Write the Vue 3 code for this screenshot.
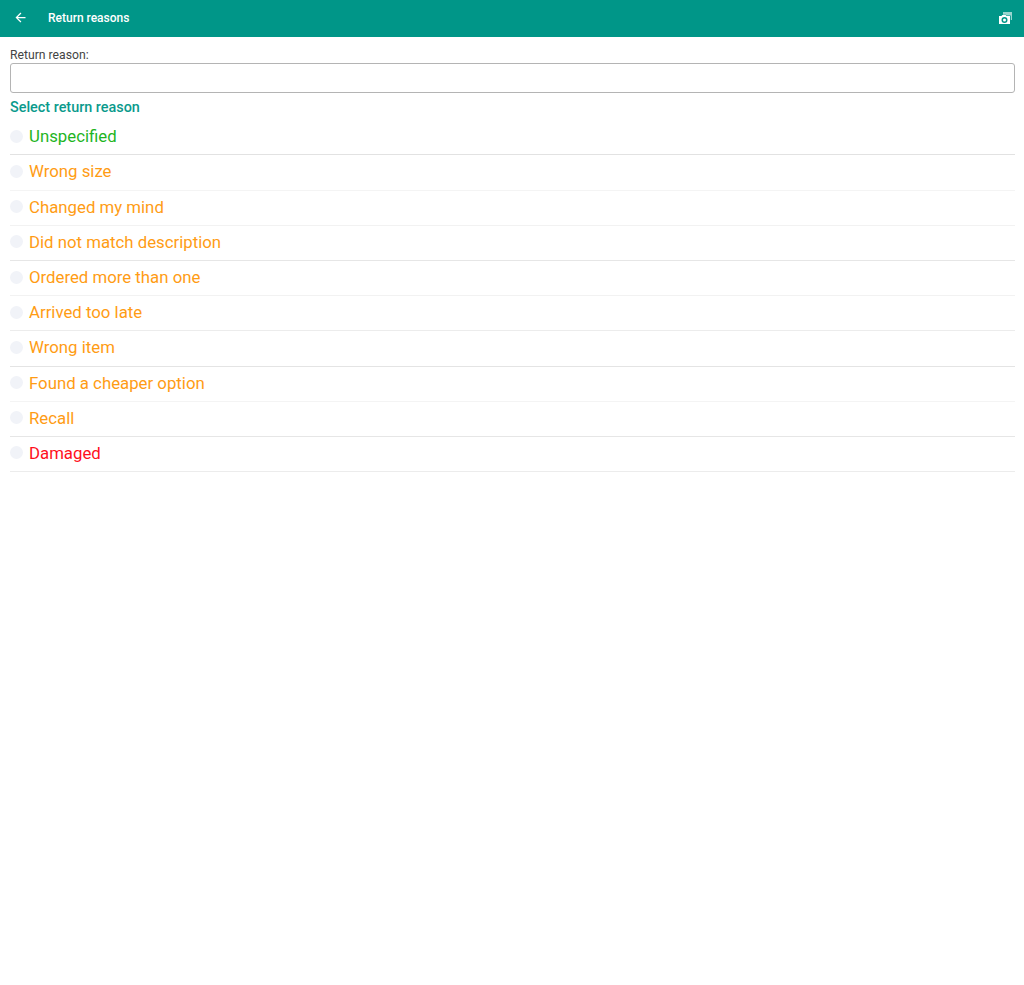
<script setup>
const orange = '#ff9c14'

const reasons = [
  { label: 'Unspecified', color: '#1fb51f', line: '#e2e2e2' },
  { label: 'Wrong size', color: orange, line: '#f4f4f4' },
  { label: 'Changed my mind', color: orange, line: '#f2f2f2' },
  { label: 'Did not match description', color: orange, line: '#e6e6e6' },
  { label: 'Ordered more than one', color: orange, line: '#f2f2f2' },
  { label: 'Arrived too late', color: orange, line: '#ececec' },
  { label: 'Wrong item', color: orange, line: '#e4e4e4' },
  { label: 'Found a cheaper option', color: orange, line: '#f4f4f4' },
  { label: 'Recall', color: orange, line: '#e6e6e6' },
  { label: 'Damaged', color: '#ff1020', line: '#ececec' }
]
</script>

<template>
  <div class="page">
    <header class="toolbar">
      <button class="icon-btn back" type="button">
        <svg width="15" height="15" viewBox="0 0 24 24" fill="#fff">
          <path d="M20 11H7.83l5.59-5.59L12 4l-8 8 8 8 1.41-1.41L7.83 13H20v-2z" />
        </svg>
      </button>
      <span class="title">Return reasons</span>
      <button class="icon-btn camera" type="button">
        <svg width="14" height="14" viewBox="0 0 14 14">
          <path fill="#fff" opacity="0.6" d="M5 1h9v8h-1.200V4.500H8.500L8 3.800H5z" />
          <path fill="#fff" fill-rule="evenodd" d="M1 5h2.500l.8-1h3.400l.8 1H12v8H1zM6.500 6a3 3 0 1 0 0 6a3 3 0 1 0 0-6zM6.500 7.500a1.500 1.500 0 1 1 0 3a1.500 1.500 0 1 1 0-3z" />
        </svg>
      </button>
    </header>

    <main class="content">
      <label class="field-label">Return reason:</label>
      <input class="field-input" type="text" />
      <h2 class="section-title">Select return reason</h2>
      <ul class="reason-list">
        <li
          v-for="r in reasons"
          :key="r.label"
          class="reason-row"
          :style="{ borderBottomColor: r.line }"
        >
          <span class="radio"></span>
          <span class="reason-text" :style="{ color: r.color }">{{ r.label }}</span>
        </li>
      </ul>
    </main>
  </div>
</template>

<style>
html, body {
  background: #fff;
}
</style>

<style scoped>
.page {
  min-height: 985px;
  background: #fff;
  font-family: Roboto, "Liberation Sans", sans-serif;
}

.toolbar {
  display: flex;
  align-items: center;
  box-sizing: border-box;
  height: 37px;
  padding-bottom: 1px;
  background: #009688;
  color: #fff;
}

.icon-btn {
  display: flex;
  align-items: center;
  justify-content: center;
  padding: 0;
  border: none;
  background: transparent;
}

.back {
  width: 15px;
  margin-left: 13px;
  margin-bottom: 1px;
}

.title {
  margin-left: 20px;
  font-size: 12px;
  font-weight: 500;
}

.camera {
  width: 14px;
  margin-left: auto;
  margin-right: 12px;
}

.content {
  display: flex;
  flex-direction: column;
  padding: 10px 9px 0 10px;
}

.field-label {
  font-size: 12.2px;
  line-height: 16px;
  color: #444;
}

.field-input {
  box-sizing: border-box;
  width: 100%;
  height: 30px;
  border: 1px solid #b4b4b4;
  border-radius: 3px;
  background: #fff;
}

.section-title {
  margin: 6px 0 0;
  font-size: 14.4px;
  line-height: 18px;
  font-weight: 500;
  color: #0a9a8c;
}

.reason-list {
  margin: 3.2px 0 0;
  padding: 0;
  list-style: none;
}

.reason-row {
  display: flex;
  align-items: center;
  box-sizing: border-box;
  height: 35.2px;
  padding-bottom: 2px;
  border-bottom: 1px solid #eee;
}

.radio {
  flex: none;
  width: 13px;
  height: 13px;
  border-radius: 50%;
  background: #f1f3f8;
}

.reason-text {
  margin-left: 6px;
  font-size: 16.8px;
}
</style>
